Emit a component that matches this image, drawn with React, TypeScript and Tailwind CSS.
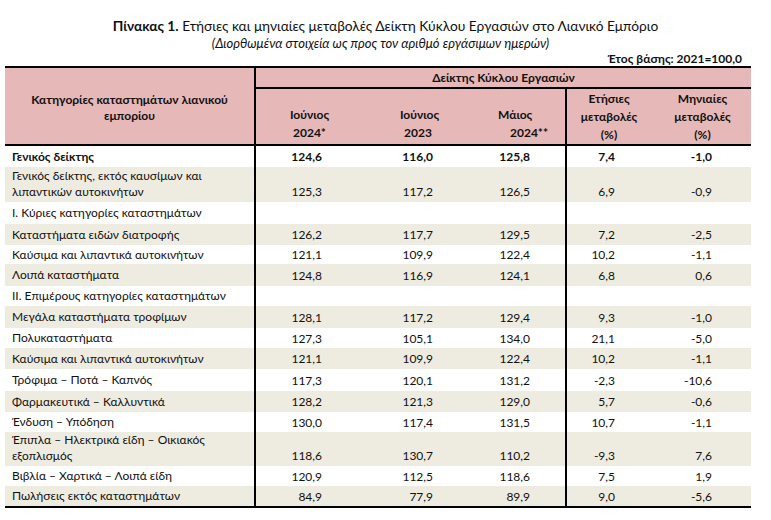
import React from 'react';

type Row = {
  label: string[];
  values?: string[];
  bold?: boolean;
  shaded?: boolean;
  h: string;
};

const rows: Row[] = [
  { label: ['Γενικός δείκτης'], values: ['124,6', '116,0', '125,8', '7,4', '-1,0'], bold: true, h: 'h-[21px]' },
  { label: ['Γενικός δείκτης, εκτός καυσίμων και', 'λιπαντικών αυτοκινήτων'], values: ['125,3', '117,2', '126,5', '6,9', '-0,9'], shaded: true, h: 'h-[35px]' },
  { label: ['Ι. Κύριες κατηγορίες καταστημάτων'], h: 'h-[22px]' },
  { label: ['Καταστήματα ειδών διατροφής'], values: ['126,2', '117,7', '129,5', '7,2', '-2,5'], shaded: true, h: 'h-[21px]' },
  { label: ['Καύσιμα και λιπαντικά αυτοκινήτων'], values: ['121,1', '109,9', '122,4', '10,2', '-1,1'], h: 'h-[19px]' },
  { label: ['Λοιπά καταστήματα'], values: ['124,8', '116,9', '124,1', '6,8', '0,6'], shaded: true, h: 'h-[22px]' },
  { label: ['ΙΙ. Επιμέρους κατηγορίες καταστημάτων'], h: 'h-[20px]' },
  { label: ['Μεγάλα καταστήματα τροφίμων'], values: ['128,1', '117,2', '129,4', '9,3', '-1,0'], shaded: true, h: 'h-[22px]' },
  { label: ['Πολυκαταστήματα'], values: ['127,3', '105,1', '134,0', '21,1', '-5,0'], h: 'h-[20px]' },
  { label: ['Καύσιμα και λιπαντικά αυτοκινήτων'], values: ['121,1', '109,9', '122,4', '10,2', '-1,1'], shaded: true, h: 'h-[21px]' },
  { label: ['Τρόφιμα – Ποτά – Καπνός'], values: ['117,3', '120,1', '131,2', '-2,3', '-10,6'], h: 'h-[22px]' },
  { label: ['Φαρμακευτικά – Καλλυντικά'], values: ['128,2', '121,3', '129,0', '5,7', '-0,6'], shaded: true, h: 'h-[21px]' },
  { label: ['Ένδυση – Υπόδηση'], values: ['130,0', '117,4', '131,5', '10,7', '-1,1'], h: 'h-[20px]' },
  { label: ['Έπιπλα – Ηλεκτρικά είδη – Οικιακός', 'εξοπλισμός'], values: ['118,6', '130,7', '110,2', '-9,3', '7,6'], shaded: true, h: 'h-[34px]' },
  { label: ['Βιβλία – Χαρτικά – Λοιπά είδη'], values: ['120,9', '112,5', '118,6', '7,5', '1,9'], h: 'h-[20px]' },
  { label: ['Πωλήσεις εκτός καταστημάτων'], values: ['84,9', '77,9', '89,9', '9,0', '-5,6'], shaded: true, h: 'h-[20px]' },
];

// right padding for each number column so figures line up like the sheet
const valueCell = [
  'pr-[37px]',
  'pr-[30px]',
  'pr-[35px] border-r-2 border-black',
  'pr-[44px]',
  'pr-[39px]',
];

function TableRow({ row }: { row: Row }) {
  const tall = row.label.length > 1;
  return (
    <div
      className={`grid grid-cols-[251px_103px_104px_104px_92px_92px] ${row.h} ${row.shaded ? 'bg-[#eeece1]' : 'bg-white'} ${row.bold ? 'font-bold' : ''}`}
    >
      <div className={`flex flex-col border-r-2 border-black pl-[7px] leading-[16px] ${tall ? 'justify-end pb-[2px]' : 'justify-center'}`}>
        {row.label.map((l) => (
          <div key={l}>{l}</div>
        ))}
      </div>
      {valueCell.map((cls, i) => (
        <div
          key={i}
          className={`flex justify-end ${cls} leading-[16px] ${tall ? 'items-end pb-[2px]' : 'items-center pt-[1px]'}`}
        >
          {row.values ? row.values[i] : ''}
        </div>
      ))}
    </div>
  );
}

export default function App() {
  return (
    <div className="w-[771px] h-[520px] bg-white text-[#111] text-[12px] font-['Lato','Noto_Sans',sans-serif]">
      {/* Title */}
      <div className="pt-[17px] text-center text-[13.75px] leading-[18px]">
        <span className="font-bold">Πίνακας 1.</span> Ετήσιες και μηνιαίες μεταβολές Δείκτη Κύκλου Εργασιών στο Λιανικό Εμπόριο
      </div>
      <div className="pr-[10px] text-center text-[13px] italic leading-[16px]">
        (Διορθωμένα στοιχεία ως προς τον αριθμό εργάσιμων ημερών)
      </div>
      <div className="h-[15px] pr-[29px] text-right font-bold leading-[15px]">Έτος βάσης: 2021=100,0</div>

      {/* Table */}
      <div className="ml-[5px] w-[746px] border-t-2 border-b-2 border-black">
        {/* Header */}
        <div className="flex h-[78px] border-b-2 border-black bg-[#e6b8b7] font-bold">
          <div className="w-[251px] border-r-2 border-black pt-[24px] text-center leading-[16px]">
            <div>Κατηγορίες καταστημάτων λιανικού</div>
            <div>εμπορίου</div>
          </div>
          <div className="flex flex-1 flex-col">
            <div className="flex h-[22px] items-center justify-center border-b-2 border-black">
              Δείκτης Κύκλου Εργασιών
            </div>
            <div className="grid flex-1 grid-cols-[103px_104px_104px_92px_92px] leading-[18px]">
              <div className="pt-[17px]">
                <div className="pl-[34px]">Ιούνιος</div>
                <div className="pl-[37px]">2024*</div>
              </div>
              <div className="pt-[17px]">
                <div className="pl-[41px]">Ιούνιος</div>
                <div className="pl-[45px]">2023</div>
              </div>
              <div className="border-r-2 border-black pt-[17px]">
                <div className="pl-[35px]">Μάιος</div>
                <div className="pl-[47px]">2024**</div>
              </div>
              <div className="pr-[8px] pt-[1px] text-center">
                <div>Ετήσιες</div>
                <div>μεταβολές</div>
                <div>(%)</div>
              </div>
              <div className="pr-[5px] pt-[1px] text-center">
                <div>Μηνιαίες</div>
                <div>μεταβολές</div>
                <div>(%)</div>
              </div>
            </div>
          </div>
        </div>

        {/* Body */}
        {rows.map((row, i) => (
          <TableRow key={i} row={row} />
        ))}
      </div>
    </div>
  );
}
